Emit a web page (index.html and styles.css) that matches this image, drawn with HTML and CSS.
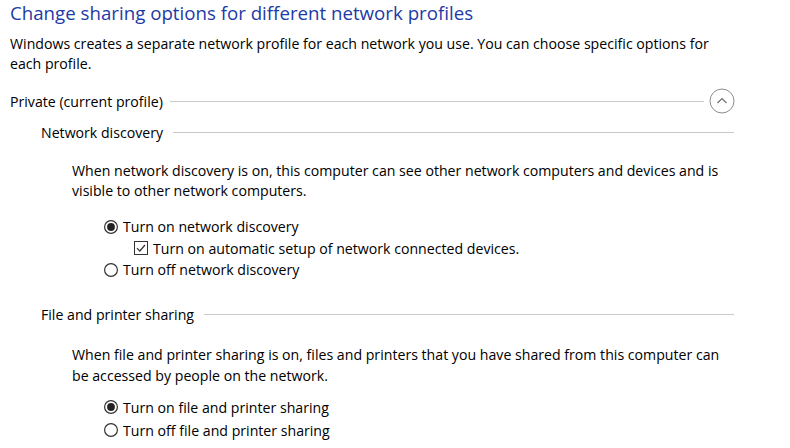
FILE: index.html
```html
<!DOCTYPE html>
<html>
<head>
<meta charset="utf-8">
<link rel="stylesheet" href="styles.css">
</head>
<body>
<div class="page">
  <h1 class="title">Change sharing options for different network profiles</h1>
  <p class="intro">Windows creates a separate network profile for each network you use. You can choose specific options for<br>each profile.</p>

  <div class="profile-head">
    <span class="label">Private (current profile)</span>
    <span class="rule"></span>
    <span class="collapse">
      <svg width="26" height="26" viewBox="0 0 26 26"><circle cx="13" cy="13" r="12" fill="none" stroke="#8c8c8c" stroke-width="1"/><path d="M8.5 15 L13 10.5 L17.5 15" fill="none" stroke="#6e6e6e" stroke-width="1.2"/></svg>
    </span>
  </div>

  <div class="section-head nd">
    <span class="label">Network discovery</span>
    <span class="rule"></span>
  </div>
  <p class="desc d1">When network discovery is on, this computer can see other network computers and devices and is<br>visible to other network computers.</p>
  <div class="options o1">
    <div class="opt">
      <svg class="radio" width="14" height="14" viewBox="0 0 14 14"><circle cx="7" cy="7" r="6.4" fill="#fff" stroke="#333" stroke-width="1.2"/><circle cx="7" cy="7" r="3.9" fill="#222"/></svg>
      <span>Turn on network discovery</span>
    </div>
    <div class="opt sub">
      <svg class="check" width="14" height="14" viewBox="0 0 14 14"><rect x="0.5" y="0.5" width="13" height="13" fill="#fff" stroke="#333" stroke-width="1"/><path d="M3 7.2 L5.8 10 L11 4" fill="none" stroke="#333" stroke-width="1.2"/></svg>
      <span>Turn on automatic setup of network connected devices.</span>
    </div>
    <div class="opt">
      <svg class="radio" width="14" height="14" viewBox="0 0 14 14"><circle cx="7" cy="7" r="6.4" fill="#fff" stroke="#333" stroke-width="1.2"/></svg>
      <span>Turn off network discovery</span>
    </div>
  </div>

  <div class="section-head fp">
    <span class="label">File and printer sharing</span>
    <span class="rule"></span>
  </div>
  <p class="desc d2">When file and printer sharing is on, files and printers that you have shared from this computer can<br>be accessed by people on the network.</p>
  <div class="options o2">
    <div class="opt">
      <svg class="radio" width="14" height="14" viewBox="0 0 14 14"><circle cx="7" cy="7" r="6.4" fill="#fff" stroke="#333" stroke-width="1.2"/><circle cx="7" cy="7" r="3.9" fill="#222"/></svg>
      <span>Turn on file and printer sharing</span>
    </div>
    <div class="opt">
      <svg class="radio" width="14" height="14" viewBox="0 0 14 14"><circle cx="7" cy="7" r="6.4" fill="#fff" stroke="#333" stroke-width="1.2"/></svg>
      <span>Turn off file and printer sharing</span>
    </div>
  </div>
</div>
</body>
</html>
```

FILE: styles.css
```css
html, body {
  margin: 0;
  padding: 0;
  background: #fff;
}
body {
  font-family: "Open Sans", "Noto Sans", "Liberation Sans", sans-serif;
  font-size: 14.15px;
  color: #000;
}
.page {
  padding: 0 0 0 10px;
  width: 724px;
}
.title {
  margin: 0;
  font-size: 18.7px;
  font-weight: normal;
  line-height: 26px;
  color: #1d3aa6;
  white-space: nowrap;
}
p {
  margin: 0;
  line-height: 20px;
  white-space: nowrap;
}
.intro {
  margin-top: 8px;
}
.profile-head {
  margin-top: 15px;
  height: 24px;
  display: flex;
  align-items: center;
}
.rule {
  flex: 1;
  height: 1px;
  background: #c9c9c9;
}
.profile-head .rule {
  margin-left: 7px;
  margin-right: 5px;
}
.collapse {
  display: flex;
  width: 26px;
  height: 26px;
  margin-right: -1px;
}
.section-head {
  display: flex;
  align-items: center;
  height: 20px;
  padding-left: 31px;
}
.section-head .label {
  white-space: nowrap;
}
.section-head .rule {
  margin-left: 10px;
}
.nd {
  margin-top: 9px;
}
.fp {
  margin-top: 24px;
}
.desc {
  padding-left: 62px;
}
.d1 {
  margin-top: 19px;
}
.d2 {
  margin-top: 19px;
  line-height: 21px;
}
.options {
  padding-left: 94px;
  display: flex;
  flex-direction: column;
}
.o1 {
  margin-top: 15px;
}
.o2 {
  margin-top: 10px;
}
.o2 .opt {
  height: 23px;
}
.opt {
  display: flex;
  align-items: center;
  height: 21.5px;
  white-space: nowrap;
}
.opt svg {
  flex: none;
  margin-right: 5px;
}
.opt.sub {
  padding-left: 30px;
}
```
